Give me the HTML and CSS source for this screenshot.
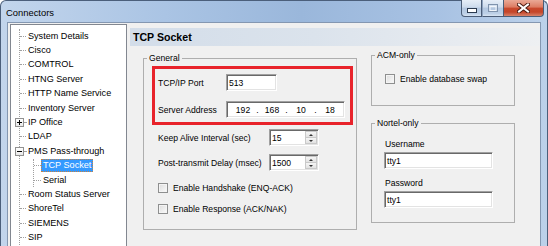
FILE: index.html
```html
<!DOCTYPE html>
<html>
<head>
<meta charset="utf-8">
<title>Connectors</title>
<link rel="stylesheet" href="styles.css">
</head>
<body>
<div class="window">
  <div class="titlebar">
    <span class="title">Connectors</span>
    <div class="caption">
      <div class="cbtn min"><svg width="10" height="5" viewBox="0 0 10 5"><rect x="0.5" y="0.5" width="9" height="4" fill="#fff" stroke="#2b3a4f"/></svg></div>
      <div class="cbtn max"><svg width="10" height="8" viewBox="0 0 10 8"><rect x="0.5" y="0.5" width="9" height="7" fill="none" stroke="#7f93ad"/><rect x="2" y="2.5" width="6" height="4" fill="none" stroke="#f2f6fb"/></svg></div>
      <div class="cbtn close"><svg width="13" height="10" viewBox="0 0 13 10"><path d="M2 1.5 L11 8.5 M11 1.5 L2 8.5" stroke="#4a1a10" stroke-width="4" stroke-linecap="square"/><path d="M2 1.5 L11 8.5 M11 1.5 L2 8.5" stroke="#fff" stroke-width="2" stroke-linecap="square"/></svg></div>
    </div>
  </div>
  <div class="client">
    <div class="tree">
      <ul class="root">
        <li><div class="row"><span class="conn"></span><span class="lbl">System Details</span></div></li>
        <li><div class="row"><span class="conn"></span><span class="lbl">Cisco</span></div></li>
        <li><div class="row"><span class="conn"></span><span class="lbl">COMTROL</span></div></li>
        <li><div class="row"><span class="conn"></span><span class="lbl">HTNG Server</span></div></li>
        <li><div class="row"><span class="conn"></span><span class="lbl">HTTP Name Service</span></div></li>
        <li><div class="row"><span class="conn"></span><span class="lbl">Inventory Server</span></div></li>
        <li><div class="row"><span class="exp"><svg width="7" height="7" viewBox="0 0 7 7"><path d="M1 3.5 H6 M3.5 1 V6" stroke="#000" stroke-width="1"/></svg></span><span class="conn short"></span><span class="lbl">IP Office</span></div></li>
        <li><div class="row"><span class="conn"></span><span class="lbl">LDAP</span></div></li>
        <li>
          <div class="row"><span class="exp"><svg width="7" height="7" viewBox="0 0 7 7"><path d="M1 3.5 H6" stroke="#000" stroke-width="1"/></svg></span><span class="conn short"></span><span class="lbl">PMS Pass-through</span></div>
          <ul class="child">
            <li><div class="row sel"><span class="conn"></span><span class="lbl">TCP Socket</span></div></li>
            <li><div class="row"><span class="conn"></span><span class="lbl">Serial</span></div></li>
          </ul>
        </li>
        <li><div class="row"><span class="conn"></span><span class="lbl">Room Status Server</span></div></li>
        <li><div class="row"><span class="conn"></span><span class="lbl">ShoreTel</span></div></li>
        <li><div class="row"><span class="conn"></span><span class="lbl">SIEMENS</span></div></li>
        <li><div class="row"><span class="conn"></span><span class="lbl">SIP</span></div></li>
      </ul>
    </div>
    <div class="pane">
      <div class="pane-head">TCP Socket</div>
      <div class="pane-body">
        <fieldset class="group general">
          <legend>General</legend>
          <div class="mark">
            <div class="frow"><span class="flabel">TCP/IP Port</span><span class="field port">513</span></div>
            <div class="frow gap"><span class="flabel">Server Address</span><span class="field ip"><span class="oct">192</span><span class="dot">.</span><span class="oct">168</span><span class="dot">.</span><span class="oct">10</span><span class="dot">.</span><span class="oct">18</span></span></div>
          </div>
          <div class="frow srow first"><span class="flabel wide">Keep Alive Interval (sec)</span><span class="field spin"><span class="val">15</span><span class="btns"><span class="sb"><i class="up"></i></span><span class="sb"><i class="down"></i></span></span></span></div>
          <div class="frow srow second"><span class="flabel wide">Post-transmit Delay (msec)</span><span class="field spin"><span class="val">1500</span><span class="btns"><span class="sb"><i class="up"></i></span><span class="sb"><i class="down"></i></span></span></span></div>
          <div class="crow c1"><span class="cb"></span><span>Enable Handshake (ENQ-ACK)</span></div>
          <div class="crow c2"><span class="cb"></span><span>Enable Response (ACK/NAK)</span></div>
        </fieldset>
        <div class="rightcol">
          <fieldset class="group acm">
            <legend>ACM-only</legend>
            <div class="crow a1"><span class="cb"></span><span>Enable database swap</span></div>
          </fieldset>
          <fieldset class="group nortel">
            <legend>Nortel-only</legend>
            <div class="nlabel first">Username</div>
            <div class="field ntext">tty1</div>
            <div class="nlabel">Password</div>
            <div class="field ntext">tty1</div>
          </fieldset>
        </div>
      </div>
    </div>
  </div>
</div>
</body>
</html>
```

FILE: styles.css
```css
* { box-sizing: border-box; }
html, body { margin: 0; padding: 0; }
body {
  width: 548px;
  height: 246px;
  overflow: hidden;
  font-family: "Liberation Sans", Arial, sans-serif;
  color: #000;
  background: #fff;
}

.window {
  width: 548px;
  height: 246px;
  display: flex;
  flex-direction: column;
  border: 1px solid #4b5f7b;
  border-bottom: none;
  border-radius: 6px 6px 0 0;
  padding: 0 6px;
  background: linear-gradient(90deg, #c2d5ec 0%, #aac4e4 30%, #9ab7db 55%, #a8c2e3 80%, #bcd1ea 100%);
}

.titlebar {
  height: 21px;
  flex: none;
  display: flex;
  justify-content: space-between;
  align-items: flex-start;
}
.title {
  font-size: 9.4px;
  line-height: 10px;
  margin-top: 7px;
  margin-left: -1px;
  color: #000;
}
.caption {
  display: flex;
  margin-top: -1px;
  margin-right: -3px;
}
.cbtn {
  height: 17px;
  border: 1px solid #4b5d77;
  border-top: none;
  display: flex;
  align-items: center;
  justify-content: center;
}
.cbtn.min {
  width: 21px;
  border-radius: 0 0 0 4px;
  align-items: flex-end;
  padding-bottom: 3px;
  background: linear-gradient(#e6eef7, #cddbec 45%, #b3c7e0 50%, #bdd0e7 85%, #d8e4f2);
}
.cbtn.max {
  width: 22px;
  border-left: 1px solid #8ea3bf;
  background: linear-gradient(#e6eef7, #cddbec 45%, #b3c7e0 50%, #bdd0e7 85%, #d8e4f2);
}
.cbtn.close {
  width: 40px;
  border-left: none;
  border-radius: 0 0 4px 0;
  background: linear-gradient(#eaa996, #dc7b62 45%, #c9492d 50%, #c44529 75%, #d7836b);
}

.client {
  flex: 1;
  min-height: 0;
  display: flex;
  background: #f0f0f0;
  border: 1px solid #8497b1;
  border-bottom: none;
}

/* tree view */
.tree {
  flex: none;
  width: 117px;
  margin: 1px 0 0 2px;
  background: #fff;
  border: 1px solid #828790;
  border-bottom: none;
  padding-top: 4px;
  overflow: hidden;
}
.tree ul {
  list-style: none;
  margin: 0;
  padding: 0;
  border-left: 1px dotted #a0a0a0;
}
.tree ul.root { margin-left: 8px; }
.tree ul.child { margin-left: 13px; }
.row {
  display: flex;
  align-items: center;
  height: 14.4px;
  font-size: 9.1px;
  white-space: nowrap;
}
.conn {
  flex: none;
  width: 6px;
  height: 0;
  border-top: 1px dotted #a0a0a0;
}
.conn.short { width: 2px; }
.child .conn { width: 7px; }
.lbl {
  padding: 0 2px;
  line-height: 13px;
}
.exp {
  flex: none;
  width: 9px;
  height: 9px;
  margin-left: -5px;
  background: linear-gradient(#ffffff, #e8e8e8);
  border: 1px solid #919191;
  display: flex;
}
.exp svg { display: block; }
.sel .lbl {
  background: #3399ff;
  color: #fff;
  outline: 1px dotted #c9813e;
  outline-offset: -1px;
}

/* right pane */
.pane {
  flex: 1;
  min-width: 0;
  margin-left: 3px;
}
.pane-head {
  margin-top: 5px;
  height: 18px;
  padding-left: 3px;
  font-weight: bold;
  font-size: 10.6px;
  line-height: 18px;
  background: linear-gradient(90deg, #d3dde9 0%, #dbe3ec 45%, #e7ebf0 80%, #eef0f2 100%);
}
.pane-body {
  display: flex;
  align-items: flex-start;
  gap: 14px;
  padding-left: 13px;
  font-size: 8.6px;
}

.group {
  margin: 0;
  padding: 0;
  border: 1px solid #aeaeae;
  min-width: 0;
}
.group legend {
  margin-left: 3px;
  padding: 0 2px;
  font-size: 8.6px;
  line-height: 10px;
}
.general {
  width: 214px;
  margin-top: 7px;
  padding-bottom: 13px;
}
.mark {
  width: 201px;
  margin: 3px 0 0 8px;
  border: 3px solid #e8232b;
  padding: 5px 0 4px 3px;
}
.frow {
  display: flex;
  align-items: center;
  height: 17px;
}
.frow.gap { margin-top: 10px; }
.flabel { width: 68px; flex: none; }
.flabel.wide { width: 111px; }
.srow { margin-left: 14px; }
.srow.first { margin-top: 4px; }
.srow.second { margin-top: 8px; }

.field {
  height: 17px;
  background: #fff;
  border: 1px solid;
  border-color: #a0a0a0 #ffffff #ffffff #a0a0a0;
  box-shadow: inset 1px 1px 0 #696969, inset -1px -1px 0 #e3e3e3;
  display: flex;
  align-items: center;
  font-size: 8.6px;
}
.port { width: 51px; padding-left: 2px; }
.ip { width: 119px; padding-left: 5px; }
.oct { width: 22px; text-align: center; }
.dot { width: 7px; text-align: center; }
.spin { width: 50px; padding: 1px 1px 1px 2px; align-items: stretch; }
.spin .val { flex: 1; display: flex; align-items: center; }
.btns {
  width: 12px;
  display: flex;
  flex-direction: column;
}
.sb {
  flex: 1;
  display: flex;
  align-items: center;
  justify-content: center;
  background: linear-gradient(#f6f6f6, #e2e2e2);
  border: 1px solid #c9c9c9;
}
.sb + .sb { border-top: none; }
.sb i {
  width: 0;
  height: 0;
  border-left: 2px solid transparent;
  border-right: 2px solid transparent;
}
.sb i.up { border-bottom: 2px solid #333; }
.sb i.down { border-top: 2px solid #333; }

.crow {
  display: flex;
  align-items: center;
  gap: 5px;
  height: 14px;
  margin-left: 14px;
}
.crow.c1 { margin-top: 10px; }
.crow.c2 { margin-top: 7px; }
.cb {
  width: 10px;
  height: 10px;
  flex: none;
  border: 1px solid #8e8f8f;
  background: linear-gradient(135deg, #dcdcdc, #fbfbfb);
  box-shadow: inset 0 0 0 1px #f4f4f4;
}

.rightcol {
  width: 144px;
  margin-top: 4px;
  display: flex;
  flex-direction: column;
}
.acm { padding-bottom: 19px; }
.crow.a1 { margin: 12px 0 0 13px; }
.nortel {
  margin-top: 12px;
  padding-bottom: 14px;
}
.nlabel {
  margin: 9px 0 0 13px;
  line-height: 11px;
}
.nlabel.first { margin-top: 11px; }
.ntext {
  width: 109px;
  margin: 2px 0 0 12px;
  padding-left: 2px;
}
```
